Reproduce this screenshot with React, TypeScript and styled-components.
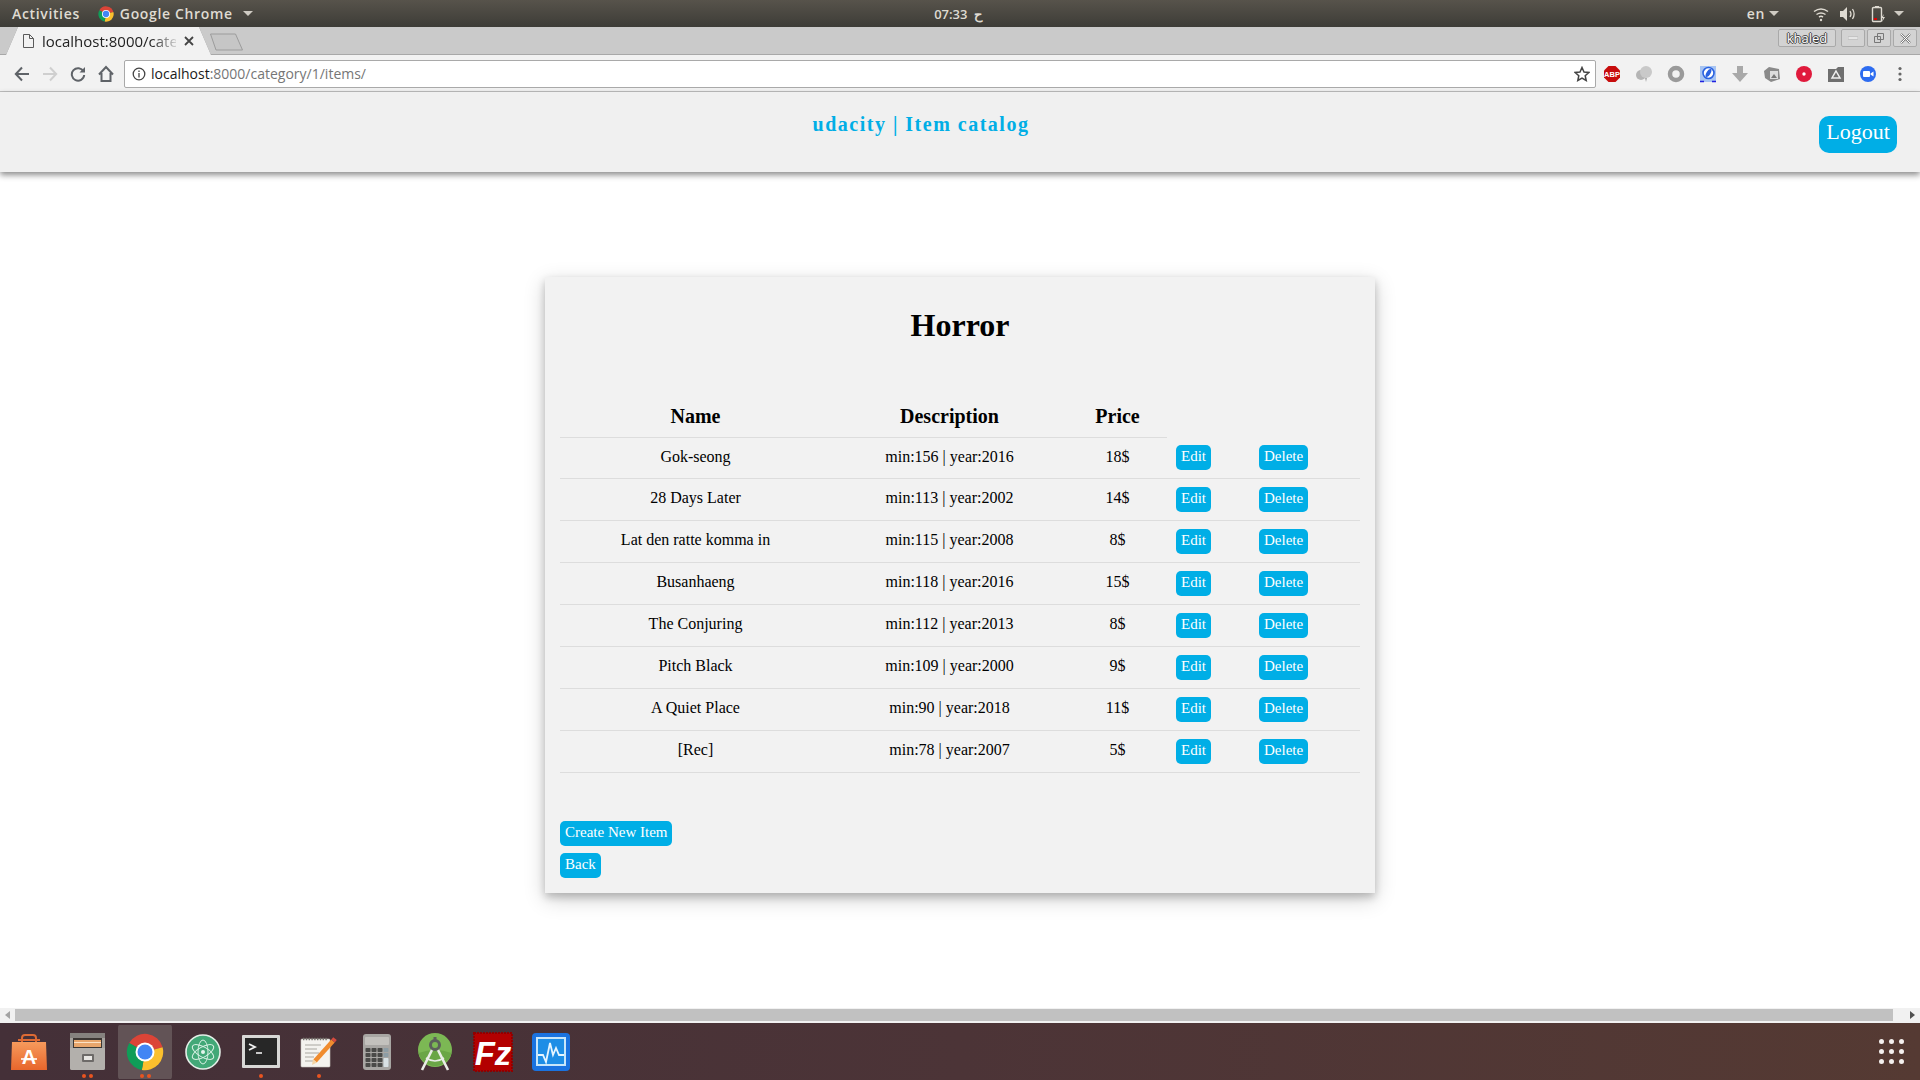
import React from "react";
import styled, { createGlobalStyle } from "styled-components";

const GlobalStyle = createGlobalStyle`
  html, body {
    margin: 0;
    padding: 0;
    background: #fff;
    overflow: hidden;
  }
  * {
    box-sizing: border-box;
  }
`;

const Screen = styled.div`
  width: 1920px;
  height: 1080px;
  display: flex;
  flex-direction: column;
  overflow: hidden;
  font-family: "Liberation Serif", serif;
`;

/* ---- system top bar ---- */
const TopBar = styled.div`
  height: 27px;
  flex: none;
  display: grid;
  grid-template-columns: 1fr auto 1fr;
  align-items: center;
  padding: 0 16px 0 12px;
  background: linear-gradient(#57534b, #3d3c37);
  color: #dfdbd2;
  font-family: "Open Sans", sans-serif;
  font-size: 14px;
  font-weight: 600;
  letter-spacing: 0.65px;
`;
const TopLeft = styled.div`
  display: flex;
  align-items: center;
`;
const TopRight = styled.div`
  display: flex;
  align-items: center;
  justify-content: flex-end;
`;
const AppMenu = styled.div`
  display: flex;
  align-items: center;
  gap: 6px;
  margin-left: 18px;
`;
const Caret = styled.span`
  width: 0;
  height: 0;
  margin-left: 4px;
  border-left: 5px solid transparent;
  border-right: 5px solid transparent;
  border-top: 5px solid #cfcbc3;
`;
const Clock = styled.div`
  font-size: 13px;
  letter-spacing: 0.45px;
  word-spacing: 3px;
`;
const TrayLang = styled.div`
  display: flex;
  align-items: center;
  margin-right: 33px;
`;
const TrayIcon = styled.span<{ $gap: number }>`
  display: flex;
  margin-right: ${(p) => p.$gap}px;
`;

/* ---- chrome tab strip ---- */
const TabStrip = styled.div`
  height: 28px;
  flex: none;
  display: flex;
  align-items: flex-end;
  position: relative;
  padding-left: 6px;
  background: #cacaca;
  border-bottom: 1px solid #a8a8a8;
  font-family: "Open Sans", sans-serif;
`;
const TabShadow = styled.div`
  filter: drop-shadow(0 0 0.6px #777);
  margin-bottom: -1px;
`;
const Tab = styled.div`
  width: 205px;
  height: 28px;
  display: flex;
  align-items: center;
  padding-left: 17px;
  background: #f2f2f2;
  clip-path: polygon(12px 0, 193px 0, 205px 100%, 0 100%);
`;
const TabTitle = styled.span`
  width: 134px;
  margin-left: 8px;
  font-size: 15px;
  color: #222;
  white-space: nowrap;
  -webkit-mask-image: linear-gradient(90deg, #000 82%, rgba(0, 0, 0, 0.15));
  mask-image: linear-gradient(90deg, #000 82%, rgba(0, 0, 0, 0.15));
`;
const TabClose = styled.span`
  display: flex;
  margin-left: 8px;
`;
const NewTab = styled.span`
  display: flex;
  margin: 0 0 3px -2px;
`;
const WindowButtons = styled.div`
  display: flex;
  gap: 2px;
  margin-left: auto;
  margin-right: 3px;
  align-self: flex-start;
  margin-top: 2px;
`;
const WindowButton = styled.div<{ $wide?: boolean }>`
  width: ${(p) => (p.$wide ? "58px" : "24px")};
  height: 18px;
  margin-right: ${(p) => (p.$wide ? "3px" : "0")};
  display: flex;
  align-items: center;
  justify-content: center;
  background: #d3d3d3;
  border: 1px solid #a9a9a9;
  border-radius: 2px;
  color: #fff;
  font-family: "Open Sans", sans-serif;
  font-size: 13px;
  text-shadow: 1px 0 #444, -1px 0 #444, 0 1px #444, 0 -1px #444;
`;

/* ---- chrome toolbar ---- */
const Toolbar = styled.div`
  height: 37px;
  flex: none;
  display: flex;
  align-items: center;
  padding: 1px 4px 0 8px;
  background: #f2f2f2;
  border-bottom: 1px solid #bfbfbf;
`;
const NavButton = styled.span`
  width: 28px;
  flex: none;
  display: flex;
  justify-content: center;
`;
const AddressBar = styled.div`
  flex: 1;
  height: 28px;
  margin-left: 4px;
  display: flex;
  align-items: center;
  padding: 0 5px 0 7px;
  background: #fff;
  border: 1px solid #a9a9a9;
  border-radius: 2px;
  font-family: "Open Sans", sans-serif;
  font-size: 14px;
`;
const Host = styled.span`
  margin-left: 5px;
  color: #1a1a1a;
`;
const UrlRest = styled.span`
  flex: 1;
  color: #767676;
`;
const Extension = styled.span`
  width: 32px;
  flex: none;
  display: flex;
  justify-content: center;
`;

/* ---- the page itself ---- */
const Page = styled.div`
  flex: 1;
  min-height: 0;
  background: #fff;
`;
const SiteNav = styled.div`
  height: 80px;
  display: flex;
  align-items: flex-start;
  padding: 0 23px;
  background: #f0f0f0;
  box-shadow: 0 3px 6px rgba(0, 0, 0, 0.45);
`;
const Brand = styled.div`
  flex: 1;
  margin-top: 21px;
  text-align: center;
  color: #00aee6;
  font-size: 20px;
  font-weight: 700;
  letter-spacing: 1.5px;
  line-height: 23px;
`;
const LogoutButton = styled.button`
  width: 78px;
  height: 37px;
  margin-top: 24px;
  padding: 0 0 6px;
  border: 0;
  border-radius: 10px;
  background: #00aee6;
  color: #fff;
  font-family: "Liberation Serif", serif;
  font-size: 22px;
`;
const Card = styled.div`
  width: 830px;
  height: 616px;
  margin: 105px auto 0;
  padding: 15px;
  background: #f2f2f2;
  box-shadow: 0 4px 8px rgba(0, 0, 0, 0.2), 0 6px 20px rgba(0, 0, 0, 0.19);
`;
const Heading = styled.h1`
  margin: 0;
  padding-top: 15px;
  text-align: center;
  color: #000;
  font-size: 32px;
  line-height: 37px;
`;
const ItemTable = styled.table`
  width: 800px;
  margin-top: 53px;
  border-collapse: collapse;
  table-layout: fixed;
  color: #000;
`;
const HeadCell = styled.th`
  height: 40px;
  padding: 8px 0;
  text-align: center;
  font-size: 20px;
  font-weight: 700;
  border-bottom: 1px solid #ddd;
`;
const BlankHead = styled.th``;
const ItemRow = styled.tr`
  height: 42px;
  &:first-child {
    height: 41px;
  }
`;
const Cell = styled.td`
  padding: 0 0 2px;
  text-align: center;
  font-size: 16px;
  border-bottom: 1px solid #ddd;
`;
const ActionCell = styled.td`
  padding: 0 0 0 9px;
  border-bottom: 1px solid #ddd;
`;
const ActionButton = styled.button`
  height: 25px;
  padding: 0 5px 2px;
  border: 0;
  border-radius: 5px;
  background: #00aee6;
  color: #fff;
  font-family: "Liberation Serif", serif;
  font-size: 15px;
  white-space: nowrap;
`;
const CardFooter = styled.div`
  display: flex;
  flex-direction: column;
  align-items: flex-start;
  gap: 7px;
  margin-top: 48px;
`;

/* ---- page scrollbar ---- */
const Scrollbar = styled.div`
  height: 15px;
  flex: none;
  display: flex;
  align-items: flex-start;
  background: #f1f1f1;
`;
const ScrollArrow = styled.span<{ $right?: boolean }>`
  width: 15px;
  height: 13px;
  flex: none;
  display: flex;
  align-items: center;
  justify-content: center;
  &::before {
    content: "";
    border-top: 4px solid transparent;
    border-bottom: 4px solid transparent;
    ${(p) =>
      p.$right
        ? "border-left: 5px solid #505050;"
        : "border-right: 5px solid #a3a3a3;"}
  }
`;
const ScrollThumb = styled.div`
  flex: 1;
  height: 12px;
  margin: 1px 12px 0 0;
  background: #c1c1c1;
`;

/* ---- ubuntu dock ---- */
const Dock = styled.div`
  height: 57px;
  flex: none;
  display: flex;
  align-items: center;
  background: linear-gradient(90deg, #443038, #4c3437 50%, #553a33);
`;
const DockItem = styled.div<{ $active?: boolean }>`
  width: 58px;
  height: 54px;
  flex: none;
  position: relative;
  display: flex;
  align-items: center;
  justify-content: center;
  border-radius: 3px;
  background: ${(p) => (p.$active ? "#625356" : "transparent")};
  background-clip: padding-box;
  border-left: 2px solid transparent;
  border-right: 2px solid transparent;
`;
const Pips = styled.div`
  position: absolute;
  left: 0;
  right: 0;
  bottom: 1px;
  display: flex;
  justify-content: center;
  gap: 3px;
`;
const Pip = styled.span`
  width: 4px;
  height: 4px;
  border-radius: 50%;
  background: #e95420;
`;
const AppGrid = styled.div`
  margin-left: auto;
  margin-right: 16px;
  display: grid;
  grid-template-columns: repeat(3, 5px);
  gap: 5px;
`;
const AppGridDot = styled.span`
  width: 5px;
  height: 5px;
  border-radius: 50%;
  background: #f4f0ee;
`;

/* ---- drawings ---- */
function sector(r: number, from: number, to: number) {
  const pt = (a: number) => {
    const rad = ((a - 90) * Math.PI) / 180;
    return `${24 + r * Math.cos(rad)} ${24 + r * Math.sin(rad)}`;
  };
  return `M24 24L${pt(from)}A${r} ${r} 0 0 1 ${pt(to)}Z`;
}

const ChromeLogo = ({ size }: { size: number }) => (
  <svg width={size} height={size} viewBox="0 0 48 48">
    <path d={sector(23, 300, 435)} fill="#db4437" />
    <path d={sector(23, 75, 190)} fill="#fbc02d" />
    <path d={sector(23, 190, 300)} fill="#0f9d58" />
    <circle cx="24" cy="24" r="12" fill="#fff" />
    <circle cx="24" cy="24" r="9.500" fill="#4285f4" />
  </svg>
);

const StoreIcon = () => (
  <svg width="36" height="38" viewBox="0 0 36 38">
    <defs>
      <linearGradient id="bag" x1="0" y1="0" x2="0" y2="1">
        <stop offset="0" stopColor="#f69a5c" />
        <stop offset="1" stopColor="#e8662c" />
      </linearGradient>
    </defs>
    <path d="M11 11V5q0-3 3-3h8q3 0 3 3v6M7 7h22" fill="none" stroke="#dc6a34" strokeWidth="2" />
    <path d="M1 9h34l1 28H0z" fill="url(#bag)" />
    <text x="18" y="31" textAnchor="middle" fontFamily="Liberation Sans" fontWeight="700" fontSize="20" fill="#fff">A</text>
    <path d="M10 26h16" stroke="#fff" strokeWidth="1.600" />
  </svg>
);

const FilesIcon = () => (
  <svg width="35" height="37" viewBox="0 0 35 37">
    <rect x="0" y="0" width="35" height="37" rx="2" fill="#a5a29e" />
    <rect x="0" y="0" width="35" height="5" fill="#85827f" />
    <rect x="3" y="5" width="29" height="10" fill="#3c3734" />
    <rect x="4" y="7" width="27" height="7" fill="#e8a66c" />
    <rect x="4" y="9" width="27" height="1" fill="#fbe2c6" />
    <path d="M0 15h35v20q0 2-2 2H2q-2 0-2-2z" fill="#b3b0ac" />
    <rect x="12" y="21" width="12" height="8" rx="1" fill="#6d6a68" />
    <rect x="14" y="23" width="8" height="4" fill="#e8e6e3" />
  </svg>
);

const AtomIcon = () => (
  <svg width="36" height="36" viewBox="0 0 36 36" fill="none">
    <circle cx="18" cy="18" r="17" fill="#42a877" stroke="#e4efe8" strokeWidth="1.600" />
    <g stroke="#d6efe2" strokeWidth="1">
      <ellipse cx="18" cy="18" rx="5" ry="12" />
      <ellipse cx="18" cy="18" rx="5" ry="12" transform="rotate(60 18 18)" />
      <ellipse cx="18" cy="18" rx="5" ry="12" transform="rotate(-60 18 18)" />
    </g>
    <circle cx="18" cy="18" r="2" fill="#e4f5ec" />
  </svg>
);

const TerminalIcon = () => (
  <svg width="38" height="33" viewBox="0 0 38 33" fill="none">
    <rect width="38" height="33" rx="1" fill="#d8d8d6" />
    <rect x="3" y="3" width="32" height="27" fill="#272727" />
    <path d="M7 9l6 3-6 3" stroke="#f2f2f2" strokeWidth="1.800" />
    <path d="M14 18h6" stroke="#f2f2f2" strokeWidth="1.600" />
  </svg>
);

const GeditIcon = () => (
  <svg width="38" height="32" viewBox="0 0 38 32" fill="none">
    <rect x="1" y="3" width="29" height="28" rx="1" fill="#f4f3ef" stroke="#c9c7c1" strokeWidth="0.600" />
    <path d="M3 3h25" stroke="#77756f" strokeWidth="2.400" strokeDasharray="1.400 1.400" />
    <path d="M5 9h16M5 13h12M5 17h14M5 21h9M5 25h10" stroke="#a9a7a0" strokeWidth="1" />
    <path d="M33 5L15 25" stroke="#f08c2e" strokeWidth="4.600" />
    <path d="M35 2.600l-2 2.400" stroke="#d64b3f" strokeWidth="4.600" />
    <path d="M12 29l1-6 4 3.500z" fill="#f3d5a6" />
  </svg>
);

const CalcIcon = () => (
  <svg width="28" height="36" viewBox="0 0 28 36">
    <rect width="28" height="36" rx="3" fill="#a8a6a3" />
    <rect x="2" y="3" width="24" height="8" rx="1" fill="#c3c1bd" />
    {[0, 1, 2, 3].map((row) =>
      [0, 1, 2, 3].map((col) => (
        <rect
          key={`${row}-${col}`}
          x={2.5 + col * 6}
          y={14 + row * 5}
          width="5"
          height="4"
          rx="0.800"
          fill={col === 3 ? "#8d9da5" : "#4a4a48"}
        />
      ))
    )}
    <rect x="20.500" y="24" width="5" height="9" rx="0.800" fill="#d9e1e4" />
  </svg>
);

const StudioIcon = () => (
  <svg width="36" height="38" viewBox="0 0 36 38" fill="none">
    <circle cx="18" cy="17" r="17" fill="#7cb854" />
    <path d="M1.500 20a17 17 0 0 0 33 0q-16-6-33 0z" fill="#6aa646" />
    <path d="M16 15L5 37M20 15l11 22" stroke="#e9ece6" strokeWidth="2.600" />
    <path d="M9 25q9 6 18 0" stroke="#e9ece6" strokeWidth="1.600" />
    <circle cx="18" cy="12" r="4.500" fill="none" stroke="#5c5f5b" strokeWidth="3" />
    <rect x="16.500" y="4" width="3" height="4" fill="#5c5f5b" />
  </svg>
);

const ZillaIcon = () => (
  <svg width="40" height="40" viewBox="0 0 40 40">
    <rect x="1" y="1" width="38" height="38" fill="#b30000" stroke="#8f0000" strokeWidth="2" strokeDasharray="2 1" />
    <text x="20" y="33" textAnchor="middle" fontFamily="Liberation Sans" fontWeight="700" fontStyle="italic" fontSize="33" fill="#fff">Fz</text>
  </svg>
);

const MonitorIcon = () => (
  <svg width="38" height="38" viewBox="0 0 38 38" fill="none">
    <rect width="38" height="38" rx="4" fill="#1a73e0" />
    <rect x="4" y="4" width="30" height="29" fill="#c7e6fa" />
    <rect x="6" y="6" width="26" height="25" fill="#1e8ee6" />
    <path d="M6 22h5l3 7 4-19 3 12 3-7 3 7h5" stroke="#e6f5ff" strokeWidth="1.800" />
  </svg>
);

const dockApps = [
  { icon: <StoreIcon />, pips: 0 },
  { icon: <FilesIcon />, pips: 2 },
  { icon: <ChromeLogo size={38} />, pips: 2, active: true },
  { icon: <AtomIcon />, pips: 0 },
  { icon: <TerminalIcon />, pips: 1 },
  { icon: <GeditIcon />, pips: 1 },
  { icon: <CalcIcon />, pips: 0 },
  { icon: <StudioIcon />, pips: 0 },
  { icon: <ZillaIcon />, pips: 0 },
  { icon: <MonitorIcon />, pips: 0 },
];

const extensions = [
  <svg width="18" height="18" viewBox="0 0 18 18" key="abp">
    <path d="M5.500 1h7L17 5.500v7L12.500 17h-7L1 12.500v-7z" fill="#c70d0d" />
    <text x="9" y="12" textAnchor="middle" fontFamily="Liberation Sans" fontWeight="700" fontSize="7.500" fill="#fff">ABP</text>
  </svg>,
  <svg width="18" height="18" viewBox="0 0 18 18" key="balloons">
    <circle cx="6" cy="10" r="5" fill="#b5b5b5" />
    <circle cx="11" cy="7" r="6" fill="#c9c9c9" />
    <path d="M10 13l1 4 1-4z" fill="#a8a8a8" />
  </svg>,
  <svg width="18" height="18" viewBox="0 0 18 18" key="ring">
    <circle cx="9" cy="9" r="6" fill="none" stroke="#9a9a9a" strokeWidth="4.500" />
  </svg>,
  <svg width="18" height="18" viewBox="0 0 18 18" fill="none" key="finder">
    <rect x="1" y="1" width="16" height="16" fill="#a7c4f2" />
    <circle cx="9.500" cy="8" r="5.500" fill="#fff" stroke="#2a62e0" strokeWidth="1.600" />
    <ellipse cx="9.500" cy="8" rx="2" ry="4.500" fill="#2a62e0" transform="rotate(30 9.500 8)" />
    <path d="M1 16.500h4M13 16.500h4" stroke="#2020e0" strokeWidth="1.500" />
  </svg>,
  <svg width="18" height="18" viewBox="0 0 18 18" key="download">
    <path d="M6 1h6v7h5l-8 9-8-9h5z" fill="#a9a9a9" />
  </svg>,
  <svg width="18" height="18" viewBox="0 0 18 18" key="photos">
    <path d="M1 6l5-4 10 2 1 10-9 3-6-4z" fill="#8a8a8a" />
    <rect x="7" y="6" width="8" height="8" fill="#dcdcdc" />
    <path d="M8 13l3-4 3 4z" fill="#777" />
  </svg>,
  <svg width="18" height="18" viewBox="0 0 18 18" key="record">
    <circle cx="9" cy="9" r="8" fill="#e01a3c" />
    <circle cx="9" cy="9" r="1.700" fill="#fff" />
  </svg>,
  <svg width="18" height="18" viewBox="0 0 18 18" key="drive">
    <path d="M1 4h8l2-2h6v15H1z" fill="#6f6f6f" />
    <path d="M9 6l4 7H5z" fill="none" stroke="#f0f0f0" strokeWidth="1.500" />
  </svg>,
  <svg width="18" height="18" viewBox="0 0 18 18" key="zoom">
    <circle cx="9" cy="9" r="8" fill="#2d6cf0" />
    <rect x="4" y="6" width="7" height="6" rx="1" fill="#fff" />
    <path d="M11.500 8.500l3-2v5l-3-2z" fill="#fff" />
  </svg>,
  <svg width="18" height="18" viewBox="0 0 18 18" fill="#666" key="menu">
    <circle cx="9" cy="3.500" r="1.600" />
    <circle cx="9" cy="9" r="1.600" />
    <circle cx="9" cy="14.500" r="1.600" />
  </svg>,
];

const items = [
  { name: "Gok-seong", desc: "min:156 | year:2016", price: "18$" },
  { name: "28 Days Later", desc: "min:113 | year:2002", price: "14$" },
  { name: "Lat den ratte komma in", desc: "min:115 | year:2008", price: "8$" },
  { name: "Busanhaeng", desc: "min:118 | year:2016", price: "15$" },
  { name: "The Conjuring", desc: "min:112 | year:2013", price: "8$" },
  { name: "Pitch Black", desc: "min:109 | year:2000", price: "9$" },
  { name: "A Quiet Place", desc: "min:90 | year:2018", price: "11$" },
  { name: "[Rec]", desc: "min:78 | year:2007", price: "5$" },
];

export default function App() {
  return (
    <Screen>
      <GlobalStyle />
      <TopBar>
        <TopLeft>
          Activities
          <AppMenu>
            <ChromeLogo size={16} />
            Google Chrome
            <Caret />
          </AppMenu>
        </TopLeft>
        <Clock>07:33 ح</Clock>
        <TopRight>
          <TrayLang>
            en
            <Caret />
          </TrayLang>
          <TrayIcon $gap={9}>
            <svg width="18" height="16" viewBox="0 0 18 16" fill="none" stroke="#dfdbd2" strokeWidth="1.500">
              <path d="M2 5.500q7-5 14 0M4.500 8.500q4.500-3.200 9 0M7 11q2-1.300 4 0" />
              <circle cx="9" cy="14" r="1.200" fill="#dfdbd2" stroke="none" />
            </svg>
          </TrayIcon>
          <TrayIcon $gap={14}>
            <svg width="18" height="16" viewBox="0 0 18 16" fill="none" stroke="#dfdbd2" strokeWidth="1.300">
              <path d="M1 5h3l4-4v14l-4-4H1z" fill="#dfdbd2" stroke="none" />
              <path d="M11 5q2 3 0 6M13.500 3q3.200 5 0 10" />
            </svg>
          </TrayIcon>
          <TrayIcon $gap={3}>
            <svg width="16" height="18" viewBox="0 0 16 18" fill="none">
              <rect x="1.500" y="2.500" width="9" height="14" rx="1" stroke="#dfdbd2" strokeWidth="1.400" />
              <rect x="4" y="1" width="4" height="2" fill="#dfdbd2" />
              <rect x="3" y="13" width="3" height="2" fill="#d00" />
              <path d="M13 9l-3 4h2l-1 4 3-5h-2z" fill="#dfdbd2" />
            </svg>
          </TrayIcon>
          <Caret />
        </TopRight>
      </TopBar>

      <TabStrip>
        <TabShadow>
          <Tab>
            <svg width="11" height="14" viewBox="0 0 11 14" fill="none" stroke="#5a5a5a">
              <path d="M.5.500h6l4 4v9H.500zM6.500.500v4h4" />
            </svg>
            <TabTitle>localhost:8000/cate</TabTitle>
            <TabClose>
              <svg width="10" height="10" viewBox="0 0 10 10" stroke="#444" strokeWidth="1.800">
                <path d="M1 1l8 8M9 1l-8 8" />
              </svg>
            </TabClose>
          </Tab>
        </TabShadow>
        <NewTab>
          <svg width="36" height="18" viewBox="0 0 36 18" fill="#c6c6c6" stroke="#9c9c9c">
            <path d="M1.500 1h25l7 16H7z" />
          </svg>
        </NewTab>
        <WindowButtons>
          <WindowButton $wide>khaled</WindowButton>
          <WindowButton>
            <svg width="10" height="4" viewBox="0 0 10 4">
              <rect y="1" width="10" height="2" fill="#fff" stroke="#999" strokeWidth="0.500" />
            </svg>
          </WindowButton>
          <WindowButton>
            <svg width="12" height="12" viewBox="0 0 12 12" fill="none" stroke="#777">
              <path d="M4.500 1.500h6v6h-6zM1.500 4.500h6v6h-6z" />
            </svg>
          </WindowButton>
          <WindowButton>
            <svg width="11" height="11" viewBox="0 0 11 11" stroke="#777" strokeWidth="2.200">
              <path d="M1 1l9 9M10 1l-9 9" />
              <path d="M1 1l9 9M10 1l-9 9" stroke="#fff" strokeWidth="1" />
            </svg>
          </WindowButton>
        </WindowButtons>
      </TabStrip>

      <Toolbar>
        <NavButton>
          <svg width="16" height="16" viewBox="0 0 16 16" fill="none" stroke="#5f6368" strokeWidth="2">
            <path d="M15 8H2M8 1.500L1.800 8 8 14.500" />
          </svg>
        </NavButton>
        <NavButton>
          <svg width="16" height="16" viewBox="0 0 16 16" fill="none" stroke="#cfcfcf" strokeWidth="2">
            <path d="M1 8h13M8 1.500L14.200 8 8 14.500" />
          </svg>
        </NavButton>
        <NavButton>
          <svg width="16" height="16" viewBox="0 0 16 16" fill="none" stroke="#5f6368" strokeWidth="2">
            <path d="M13.500 5.500A6.200 6.200 0 1 0 14.200 9" />
            <path d="M15 1v5.500H9.500" fill="#5f6368" stroke="none" />
          </svg>
        </NavButton>
        <NavButton>
          <svg width="18" height="18" viewBox="0 0 18 18" fill="none" stroke="#5f6368" strokeWidth="2">
            <path d="M2 9.500L9 2l7 7.500M4.500 8v8h9V8" />
          </svg>
        </NavButton>
        <AddressBar>
          <svg width="14" height="14" viewBox="0 0 14 14" fill="none" stroke="#444" strokeWidth="1.300">
            <circle cx="7" cy="7" r="5.800" />
            <path d="M7 6v4.500M7 3.500v1.400" />
          </svg>
          <Host>localhost</Host>
          <UrlRest>:8000/category/1/items/</UrlRest>
          <svg width="16" height="16" viewBox="0 0 16 16" fill="none" stroke="#444" strokeWidth="1.500">
            <path d="M8 1.500l2 4.500 4.800.500-3.600 3.200 1 4.800L8 12l-4.200 2.500 1-4.800L1.200 6.500 6 6z" />
          </svg>
        </AddressBar>
        {extensions.map((icon) => (
          <Extension key={icon.key}>{icon}</Extension>
        ))}
      </Toolbar>

      <Page>
        <SiteNav>
          <Brand>udacity | Item catalog</Brand>
          <LogoutButton>Logout</LogoutButton>
        </SiteNav>
        <Card>
          <Heading>Horror</Heading>
          <ItemTable>
            <colgroup>
              <col style={{ width: 271 }} />
              <col style={{ width: 237 }} />
              <col style={{ width: 99 }} />
              <col style={{ width: 83 }} />
              <col style={{ width: 110 }} />
            </colgroup>
            <thead>
              <tr>
                <HeadCell>Name</HeadCell>
                <HeadCell>Description</HeadCell>
                <HeadCell>Price</HeadCell>
                <BlankHead />
                <BlankHead />
              </tr>
            </thead>
            <tbody>
              {items.map((item) => (
                <ItemRow key={item.name}>
                  <Cell>{item.name}</Cell>
                  <Cell>{item.desc}</Cell>
                  <Cell>{item.price}</Cell>
                  <ActionCell>
                    <ActionButton>Edit</ActionButton>
                  </ActionCell>
                  <ActionCell>
                    <ActionButton>Delete</ActionButton>
                  </ActionCell>
                </ItemRow>
              ))}
            </tbody>
          </ItemTable>
          <CardFooter>
            <ActionButton>Create New Item</ActionButton>
            <ActionButton>Back</ActionButton>
          </CardFooter>
        </Card>
      </Page>

      <Scrollbar>
        <ScrollArrow />
        <ScrollThumb />
        <ScrollArrow $right />
      </Scrollbar>

      <Dock>
        {dockApps.map((app, i) => (
          <DockItem key={i} $active={app.active}>
            {app.icon}
            <Pips>
              {Array.from({ length: app.pips }).map((_, j) => (
                <Pip key={j} />
              ))}
            </Pips>
          </DockItem>
        ))}
        <AppGrid>
          {Array.from({ length: 9 }).map((_, i) => (
            <AppGridDot key={i} />
          ))}
        </AppGrid>
      </Dock>
    </Screen>
  );
}
